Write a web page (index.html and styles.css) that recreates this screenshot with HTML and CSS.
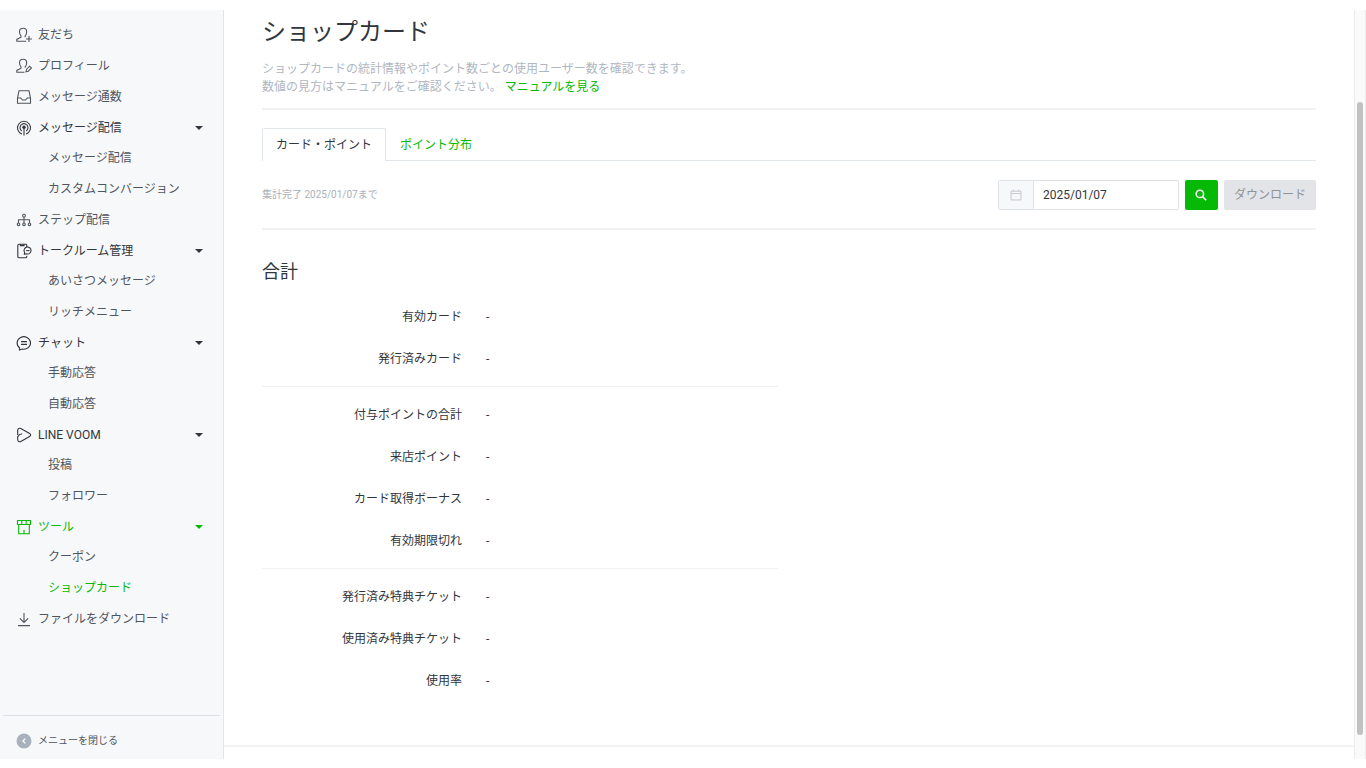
FILE: index.html
```html
<!DOCTYPE html>
<html lang="ja">
<head>
<meta charset="utf-8">
<title>ショップカード</title>
<link rel="stylesheet" href="styles.css">
</head>
<body>
<div class="app">
  <aside class="sidebar">
    <nav class="nav" aria-label="メニュー">
      <ul class="nav-list">
        <li><a class="nav-link" href="#"><svg class="icon" viewBox="0 0 16 16"><path d="M10.2 14.2H.8V12.4L5 10.2V8.8C4 7.8 3.5 6.4 3.5 4.8C3.5 2.6 4.9 1.2 7.1 1.2S10.7 2.6 10.7 4.8C10.7 6.4 10.2 7.8 9.2 8.8V10.2M13 9V15M10 12H16"/></svg>友だち</a></li>
        <li><a class="nav-link" href="#"><svg class="icon" viewBox="0 0 16 16"><path d="M8.4 14.2H.8V12.4L5 10.2V8.8C4 7.8 3.5 6.4 3.5 4.8C3.5 2.6 4.9 1.2 7.1 1.2S10.7 2.6 10.7 4.8C10.7 6.4 10.2 7.8 9.2 8.8V9.8M10 13.8L10.5 11.4L13.6 8.2L15.5 10L12.3 13.2Z"/></svg>プロフィール</a></li>
        <li><a class="nav-link" href="#"><svg class="icon" viewBox="0 0 16 16"><path d="M1.5 9L3 1.8H13L14.5 9V14.2H1.5ZM1.5 9H4.7L6.5 11H9.5L11.3 9H14.5"/></svg>メッセージ通数</a></li>
        <li>
          <a class="nav-link parent" href="#"><svg class="icon" viewBox="0 0 16 16"><path d="M6 14A6.5 6.5 0 1 1 10 14M5.8 11A4 4 0 1 1 10.2 11M8 7.5V15.5"/><circle class="solid" cx="8" cy="7.3" r="1.7"/></svg>メッセージ配信<span class="caret"></span></a>
          <ul class="subnav"><li><a class="sub-link" href="#">メッセージ配信</a></li><li><a class="sub-link" href="#">カスタムコンバージョン</a></li></ul>
        </li>
        <li><a class="nav-link" href="#"><svg class="icon" viewBox="0 0 16 16"><path d="M8 5V11M2.5 11V7.8H13.5V11"/><circle cx="8" cy="3.7" r="1.4"/><circle cx="2.5" cy="12.3" r="1.3"/><circle cx="8" cy="12.3" r="1.3"/><circle cx="13.5" cy="12.3" r="1.3"/></svg>ステップ配信</a></li>
        <li>
          <a class="nav-link parent" href="#"><svg class="icon" viewBox="0 0 16 16"><path d="M10.8 3.5V2.2Q10.8 1.2 9.8 1.2H3.2Q1.8 1.2 1.8 2.6V13.4Q1.8 14.8 3.2 14.8H9.4Q10.8 14.8 10.8 13.4V12.8M4.4 1.5V2.6H8V1.5M8.4 11.2L8.7 9.5A3.5 3.5 0 1 1 10.4 10.8Z"/><path d="M10.2 7.6H13.5"/></svg>トークルーム管理<span class="caret"></span></a>
          <ul class="subnav"><li><a class="sub-link" href="#">あいさつメッセージ</a></li><li><a class="sub-link" href="#">リッチメニュー</a></li></ul>
        </li>
        <li>
          <a class="nav-link parent" href="#"><svg class="icon" viewBox="0 0 16 16"><path d="M3.5 12.8V15L6.2 14.1A6.7 6.3 0 1 0 3.5 12.8ZM5 6.6H11M5 9.4H11"/></svg>チャット<span class="caret"></span></a>
          <ul class="subnav"><li><a class="sub-link" href="#">手動応答</a></li><li><a class="sub-link" href="#">自動応答</a></li></ul>
        </li>
        <li>
          <a class="nav-link parent" href="#"><svg class="icon" viewBox="0 0 16 16"><path d="M1.7 8V3.2C1.7 1.5 3.3.8 4.8 1.6L13.6 6.5C15 7.3 15 8.7 13.6 9.5L4.8 14.4C3.3 15.2 1.7 14.5 1.7 12.8V9.6Q3.2 7.2 6.2 6.8"/></svg>LINE VOOM<span class="caret"></span></a>
          <ul class="subnav"><li><a class="sub-link" href="#">投稿</a></li><li><a class="sub-link" href="#">フォロワー</a></li></ul>
        </li>
        <li>
          <a class="nav-link parent active" href="#"><svg class="icon" viewBox="0 0 16 16"><path d="M1.5 1.5H14.5V5.5H1.5ZM5.8 1.5V5.5M10.2 1.5V5.5M2.7 5.5V14.7H13.3V5.5M8 14.7V10.8"/></svg>ツール<span class="caret"></span></a>
          <ul class="subnav"><li><a class="sub-link" href="#">クーポン</a></li><li><a class="sub-link active" href="#" aria-current="page">ショップカード</a></li></ul>
        </li>
        <li><a class="nav-link" href="#"><svg class="icon" viewBox="0 0 16 16"><path d="M8 2V11.5M3.8 7.4L8 11.5L12.2 7.4M2 14.6H14"/></svg>ファイルをダウンロード</a></li>
      </ul>
    </nav>
    <button class="collapse" type="button"><svg class="collapse-icon" viewBox="0 0 16 16"><circle cx="8" cy="8" r="7.5"/><path d="M9.3 5.6L6.9 8L9.3 10.4"/></svg>メニューを閉じる</button>
  </aside>

  <div class="page">
    <main class="content">
      <header class="page-header">
        <h1>ショップカード</h1>
        <p>ショップカードの統計情報やポイント数ごとの使用ユーザー数を確認できます。<br>数値の見方はマニュアルをご確認ください。 <a href="#">マニュアルを見る</a></p>
      </header>
      <nav class="tabs" aria-label="表示切り替え">
        <a class="tab selected" href="#" aria-current="true">カード・ポイント</a>
        <a class="tab" href="#">ポイント分布</a>
      </nav>
      <form class="toolbar">
        <p class="status">集計完了 2025/01/07まで</p>
        <div class="date-field">
          <label for="date" aria-label="日付"><svg class="calendar" viewBox="0 0 12 12"><path d="M1 2.2H11V11H1ZM1 4.6H11M3.5 .6V2.2M8.5 .6V2.2"/></svg></label>
          <input id="date" type="text" value="2025/01/07">
        </div>
        <button class="search" type="button" aria-label="検索"><svg viewBox="0 0 12 12"><circle cx="4.9" cy="4.9" r="3.7"/><path d="M7.6 7.6L11.2 11.2"/></svg></button>
        <button class="download" type="button" disabled>ダウンロード</button>
      </form>
      <section class="totals">
        <h2>合計</h2>
        <dl>
          <div><dt>有効カード</dt><dd>-</dd></div>
          <div><dt>発行済みカード</dt><dd>-</dd></div>
        </dl>
        <dl>
          <div><dt>付与ポイントの合計</dt><dd>-</dd></div>
          <div><dt>来店ポイント</dt><dd>-</dd></div>
          <div><dt>カード取得ボーナス</dt><dd>-</dd></div>
          <div><dt>有効期限切れ</dt><dd>-</dd></div>
        </dl>
        <dl>
          <div><dt>発行済み特典チケット</dt><dd>-</dd></div>
          <div><dt>使用済み特典チケット</dt><dd>-</dd></div>
          <div><dt>使用率</dt><dd>-</dd></div>
        </dl>
      </section>
    </main>
    <footer class="page-footer"></footer>
  </div>
  <div class="scroll-track"><div class="scroll-thumb"></div></div>
</div>
</body>
</html>
```
FILE: styles.css
```css
* { box-sizing: border-box; }

body {
  margin: 0;
  background: #fff;
  color: #31363d;
  font: 12px/18px Roboto, "Noto Sans CJK JP", sans-serif;
}

h1, h2, p, ul, dl, dd { margin: 0; padding: 0; font-weight: 400; }
ul { list-style: none; }
a { color: #06b906; text-decoration: none; }
button, input { font: inherit; color: inherit; margin: 0; }
svg { display: block; fill: none; flex: none; }

.app {
  display: flex;
  min-height: 100vh;
  padding: 10px 0 9px;
}

/* Sidebar */
.sidebar {
  display: flex;
  flex-direction: column;
  flex: none;
  width: 224px;
  background: #f7f8fa;
  border-right: 1px solid #e3e5e8;
}

.nav { flex: 1; padding-top: 9px; }

.nav-link {
  display: flex;
  align-items: center;
  gap: 6px;
  height: 31px;
  padding: 0 20px 0 16px;
  color: #50565e;
}
.nav-link.parent { color: #31363d; }

.icon {
  width: 16px;
  height: 16px;
  stroke: currentColor;
  stroke-width: 1.1;
}
.icon .solid { fill: currentColor; stroke: none; }

.caret {
  margin-left: auto;
  border: 4px solid transparent;
  border-top-color: currentColor;
  border-bottom: 0;
}

.sub-link {
  display: flex;
  align-items: center;
  height: 30px;
  padding-left: 48px;
  color: #50565e;
}
.subnav li:last-child .sub-link { height: 31px; }
.nav-link.active, .sub-link.active { color: #06b906; }

.collapse {
  display: flex;
  align-items: center;
  gap: 6px;
  height: 44px;
  margin: 0 3px;
  padding: 6px 13px 0;
  background: none;
  border: 0;
  border-top: 1px solid #dcdfe3;
  color: #50565e;
  font-size: 10px;
}
.collapse-icon { width: 16px; height: 16px; }
.collapse-icon circle { fill: #a9b2bc; }
.collapse-icon path { stroke: #fff; stroke-width: 1.3; }

/* Page */
.page {
  display: flex;
  flex-direction: column;
  flex: 1;
  min-width: 0;
}
.content { flex: 1; padding: 0 38px; }
.page-footer { height: 14px; border-top: 2px solid #f2f3f4; }

.page-header {
  padding: 4px 0 12px;
  border-bottom: 2px solid #f1f2f3;
}
.page-header h1 { font-size: 24px; line-height: 36px; }
.page-header p { margin-top: 10px; color: #b0b7bf; }

.tabs {
  display: flex;
  margin-top: 18px;
  border-bottom: 1px solid #e1e7eb;
}
.tab {
  padding: 7px 13px 6px;
  border: 1px solid transparent;
  border-bottom: 0;
}
.tab.selected {
  margin-bottom: -1px;
  border-color: #e1e7eb;
  border-radius: 2px 2px 0 0;
  background: #fff;
  color: #31363d;
}

.toolbar {
  display: flex;
  align-items: center;
  gap: 6px;
  padding: 19px 0 18px;
  border-bottom: 2px solid #f1f2f3;
}
.status {
  margin-right: auto;
  color: #a9b1ba;
  font-size: 10px;
}

.date-field {
  display: flex;
  width: 181px;
  height: 30px;
  border: 1px solid #dfe3e8;
  border-radius: 2px;
}
.date-field label {
  display: grid;
  place-items: center;
  width: 35px;
  background: #f7f8fa;
  border-right: 1px solid #dfe3e8;
}
.date-field input {
  flex: 1;
  min-width: 0;
  padding: 0 9px;
  border: 0;
  outline: 0;
  background: none;
}
.calendar { width: 12px; height: 12px; stroke: #c3c8ce; }

.search {
  display: grid;
  place-items: center;
  width: 33px;
  height: 30px;
  padding: 0;
  border: 0;
  border-radius: 2px;
  background: #06b906;
}
.search svg { width: 12px; height: 12px; stroke: #fff; stroke-width: 1.5; }

.download {
  height: 30px;
  padding: 0 10px;
  border: 0;
  border-radius: 2px;
  background: #e3e4e8;
  color: #8f9297;
}

/* Totals */
.totals { width: 49%; padding-top: 28px; }
.totals h2 { margin-bottom: 11px; font-size: 18px; line-height: 27px; }
.totals dl { padding-bottom: 6px; }
.totals dl + dl { padding-top: 7px; border-top: 1px solid #f0f1f3; }
.totals dl div {
  display: flex;
  align-items: center;
  gap: 24px;
  height: 42px;
}
.totals dt { width: 200px; text-align: right; }

/* Scrollbar */
.scroll-track {
  display: flex;
  flex-direction: column;
  flex: none;
  width: 12px;
  padding: 0 2px;
  background: #fafafa;
  border: solid #ececec;
  border-width: 0 1px;
}
.scroll-track::before { content: ""; flex: 92; }
.scroll-track::after { content: ""; flex: 24; }
.scroll-thumb { flex: 633; background: #c1c1c1; border-radius: 4px; }
```
